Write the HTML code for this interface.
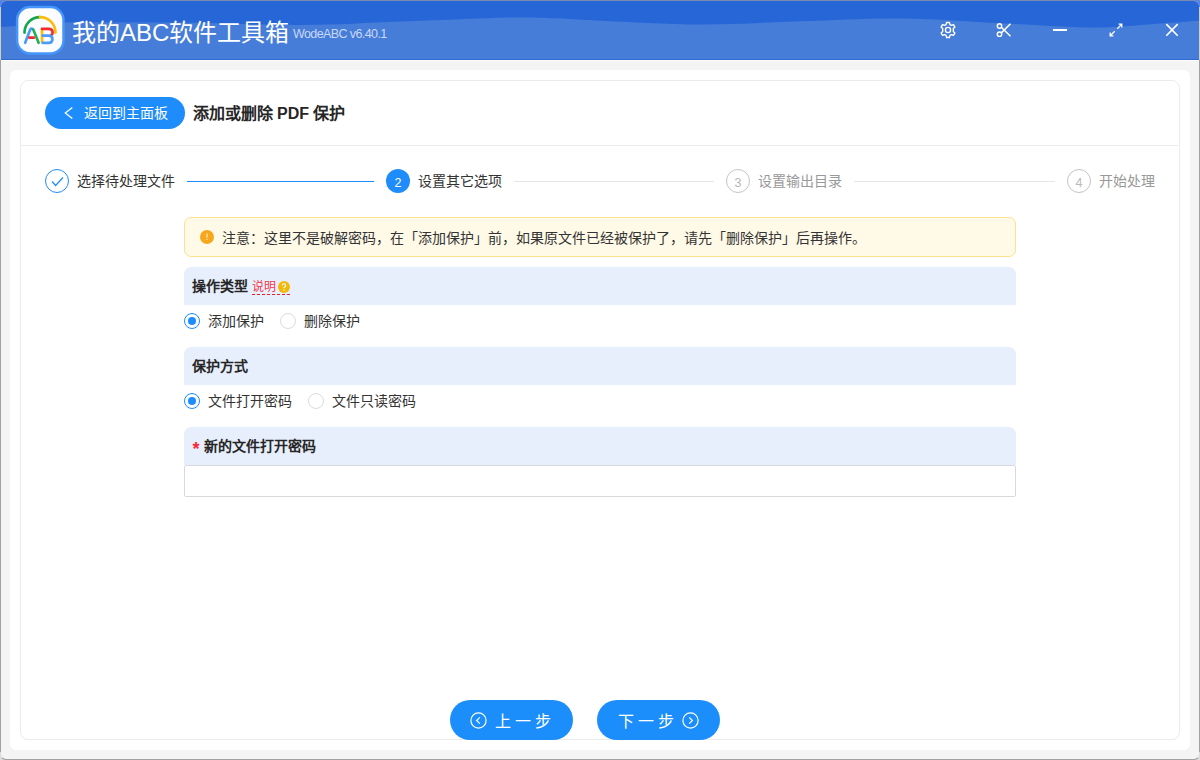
<!DOCTYPE html>
<html lang="zh-CN">
<head>
<meta charset="utf-8">
<title>我的ABC软件工具箱</title>
<style>
*{box-sizing:border-box;margin:0;padding:0}
html,body{width:1200px;height:760px;overflow:hidden;background:#d5ccb4}
body{font-family:"Liberation Sans",sans-serif;color:#333;position:relative}
.desk{position:absolute;left:0;top:0;width:1200px;height:7px;background:#5a83e3}
.desk2{position:absolute;left:0;bottom:0;width:1200px;height:8px;background:#dcdcdc}
.win{position:absolute;left:0;top:0;width:1200px;height:760px;border:1px solid #a0a0a0;border-top-color:#7b8bb5;border-left-color:transparent;border-right-color:transparent;border-radius:7px 7px 6px 6px;overflow:hidden;background:#f4f4f4;background-clip:padding-box}
.vb{position:absolute;top:60px;width:1px;height:692px;background:#a0a0a0}
.hdr{position:absolute;left:0;top:0;width:1198px;height:59px;background:#467dd9;overflow:hidden}
.hdr svg.wave{position:absolute;left:0;top:0}
.hdr .bline{position:absolute;left:0;top:58px;width:100%;height:1px;background:#2d6ad6}
.cream{position:absolute;left:0;top:59px;width:100%;height:1px;background:#fffcf4}
.abs{position:absolute;white-space:nowrap}
.j{text-align:justify;text-align-last:justify}
.title{left:72px;top:15.5px;font-size:24px;line-height:34px;color:#fff;letter-spacing:0}
.ver{left:293px;top:25px;font-size:12.5px;line-height:18px;letter-spacing:-0.6px;color:#c9d8f4}
.card{position:absolute;left:10px;top:70px;width:1180px;height:680px;background:#fff;border-radius:6px}
.panel{position:absolute;left:20px;top:80px;width:1160px;height:660px;border:1px solid #ebebeb;border-radius:8px;background:#fff}
.back{position:absolute;left:45px;top:97px;width:140px;height:32px;border-radius:16px;background:#1e8cfa;color:#fff}
.back .t{position:absolute;left:38.5px;top:0;font-size:14px;line-height:32px}
.ptitle{left:192.5px;top:103px;font-size:16px;line-height:22px;color:#262626;font-weight:bold}
.sep{position:absolute;left:20px;top:145px;width:1158px;height:1px;background:#ececec}
.circ{position:absolute;width:24px;height:24px;border-radius:50%;top:169px;text-align:center;font-size:12.5px;line-height:27px}
.c-done{border:1px solid #1e8cfa}
.c-act{background:#1e8cfa;color:#fff;line-height:29px}
.c-wait{border:1px solid #c4c4c4;color:#b8b8b8}
.stxt{top:171px;font-size:14px;line-height:20px}
.line{position:absolute;top:181px;height:1px}
.notice{position:absolute;left:184px;top:217px;width:832px;height:40px;border:1px solid #fde28c;border-radius:7px;background:#fff9e7}
.ntxt{left:221.5px;top:227.5px;font-size:14px;line-height:20px;color:#333}
.sh{position:absolute;left:184px;width:832px;height:38px;background:#e8effc;border-radius:7px 7px 0 0}
.shtxt{font-size:14px;line-height:20px;font-weight:bold;color:#262626}
.radio{position:absolute;width:16px;height:16px;border-radius:50%;border:1px solid #dcdcdc;background:#fff}
.radio.on{border-color:#1e8cfa}
.radio.on:after{content:"";position:absolute;left:3px;top:3px;width:8px;height:8px;border-radius:50%;background:#1e8cfa}
.rtxt{font-size:14px;line-height:20px;color:#333}
.input{position:absolute;left:184px;top:465px;width:832px;height:32px;border-radius:2px;border:1px solid #d9d9d9;background:#fff}
.btn{position:absolute;top:700px;width:123px;height:40px;border-radius:20px;background:#1c8efc;color:#fff}
.btn .t{position:absolute;top:2px;font-size:16px;line-height:40px;letter-spacing:4px}
</style>
</head>
<body>
<div class="desk"></div><div class="desk2"></div>
<div class="win">
  <div class="hdr">
    <svg class="wave" width="1200" height="60" viewBox="0 0 1200 60">
      <path d="M-20 0 L-20 27 C-16.7 26.83 -10.0 26.63 0.0 26.00 C10.0 25.37 28.3 23.98 40.0 23.20 C51.7 22.42 46.7 21.57 70.0 21.30 C93.3 21.03 141.7 21.15 180.0 21.60 C218.3 22.05 263.3 24.18 300.0 24.00 C336.7 23.82 366.7 21.72 400.0 20.50 C433.3 19.28 475.0 17.25 500.0 16.70 C525.0 16.15 533.3 16.70 550.0 17.20 C566.7 17.70 575.0 18.65 600.0 19.70 C625.0 20.75 666.7 23.40 700.0 23.50 C733.3 23.60 766.7 21.30 800.0 20.30 C833.3 19.30 866.7 17.17 900.0 17.50 C933.3 17.83 975.0 21.05 1000.0 22.30 C1025.0 23.55 1033.3 24.30 1050.0 25.00 C1066.7 25.70 1083.3 26.78 1100.0 26.50 C1116.7 26.22 1133.3 24.43 1150.0 23.30 C1166.7 22.17 1188.3 20.50 1200.0 19.70 C1211.7 18.90 1216.7 18.70 1220.0 18.50 L1220 0 Z" fill="#2766d6"/>
    </svg>
    <div class="bline"></div>
  </div>
  <div class="cream"></div>
</div>
<div class="vb" style="left:0"></div><div class="vb" style="left:1199px"></div>

<!-- logo -->
<svg class="abs" style="left:15px;top:4.5px" width="51" height="51" viewBox="0 0 51 51">
  <rect x="2.1" y="2.1" width="46.4" height="46.4" rx="13" fill="#fafcff" stroke="#4596fc" stroke-width="2.5"/>
  <path d="M9.5 27.6 A15.5 15.5 0 0 1 25 12.1" fill="none" stroke="#12a64a" stroke-width="2.7" stroke-linecap="round"/>
  <path d="M25 12.1 A15.5 15.5 0 0 1 40.5 27.6" fill="none" stroke="#fbbc0c" stroke-width="2.7" stroke-linecap="round"/>
  <path d="M10.2 37.8 L15 25 Q16.5 22.4 18.2 24.6" fill="none" stroke="#4a9cf8" stroke-width="2.7" stroke-linecap="round"/>
  <path d="M18.2 24.6 Q19 26 23.6 37.8" fill="none" stroke="#22b057" stroke-width="2.7" stroke-linecap="round"/>
  <path d="M14.4 32.7 H18.8" fill="none" stroke="#f52a2a" stroke-width="2.7" stroke-linecap="round"/>
  <path d="M27 23.8 V37.8" fill="none" stroke="#fbbc0c" stroke-width="2.7"/>
  <path d="M27 23.8 H33.5 Q37.6 23.8 37.6 27.2 Q37.6 29.2 36.4 30" fill="none" stroke="#f52a2a" stroke-width="2.7" stroke-linecap="round"/>
  <path d="M27.6 30.6 H33.6 Q37.4 30.6 37.4 34.2 Q37.4 37.8 33.6 37.8 H27.6" fill="none" stroke="#4a9cf8" stroke-width="2.7" stroke-linecap="round"/>
</svg>
<div class="abs title j" style="width:213px">我的ABC软件工具箱</div>
<div class="abs ver">WodeABC v6.40.1</div>

<div class="card"></div>
<div class="panel"></div>


<!-- title bar icons -->
<svg class="abs" style="left:938px;top:20px" width="20" height="20" viewBox="0 0 20 20">
  <path d="M8.6 2.5 H11.4 L11.9 4.6 L13.4 5.4 L15.5 4.7 L16.9 7.1 L15.3 8.6 V10 V11.4 L16.9 12.9 L15.5 15.3 L13.4 14.6 L11.9 15.4 L11.4 17.5 H8.6 L8.1 15.4 L6.6 14.6 L4.5 15.3 L3.1 12.9 L4.7 11.4 V8.6 L3.1 7.1 L4.5 4.7 L6.6 5.4 L8.1 4.6 Z" fill="none" stroke="#fff" stroke-width="1.4" stroke-linejoin="round"/>
  <circle cx="10" cy="10" r="2.6" fill="none" stroke="#fff" stroke-width="1.4"/>
</svg>
<svg class="abs" style="left:994px;top:20px" width="20" height="20" viewBox="0 0 20 20">
  <circle cx="5.5" cy="6" r="2.2" fill="none" stroke="#fff" stroke-width="1.4"/>
  <circle cx="5.5" cy="14.2" r="2.2" fill="none" stroke="#fff" stroke-width="1.4"/>
  <path d="M7.3 7.3 L16.5 16.3 M7.3 12.9 L16.5 3.7" fill="none" stroke="#fff" stroke-width="1.5"/>
</svg>
<div class="abs" style="left:1053px;top:29px;width:14px;height:2px;background:#fff"></div>
<svg class="abs" style="left:1106px;top:20px" width="20" height="20" viewBox="0 0 20 20">
  <path d="M11.3 8.7 L15.6 4.4 M12.6 4.2 H15.8 V7.4 M8.7 11.3 L4.4 15.6 M4.2 12.6 V15.8 H7.4" fill="none" stroke="#fff" stroke-width="1.3"/>
</svg>
<svg class="abs" style="left:1161px;top:20px" width="20" height="20" viewBox="0 0 20 20">
  <path d="M5.3 4.1 L16.7 15.8 M16.7 4.1 L5.3 15.8" fill="none" stroke="#fff" stroke-width="1.6"/>
</svg>

<!-- header row -->
<div class="back">
  <svg class="abs" style="left:18px;top:9px" width="12" height="14" viewBox="0 0 12 14"><path d="M9.3 1.5 L2.3 7 L9.3 12.5" fill="none" stroke="#fff" stroke-width="1.3"/></svg>
  <div class="t j" style="width:84px">返回到主面板</div>
</div>
<div class="abs ptitle j" style="width:150px">添加或删除 <b>PDF</b> 保护</div>
<div class="sep"></div>

<!-- steps -->
<div class="circ c-done" style="left:45px">
  <svg class="abs" style="left:5px;top:6px" width="13" height="11" viewBox="0 0 13 11"><path d="M1 5.5 L4.6 9.5 L12 1.5" fill="none" stroke="#1e8cfa" stroke-width="1.2"/></svg>
</div>
<div class="abs stxt j" style="width:98px;left:77px;color:#333">选择待处理文件</div>
<div class="line" style="left:187px;width:187px;background:#1e8cfa"></div>
<div class="circ c-act" style="left:386px">2</div>
<div class="abs stxt j" style="width:84px;left:418px;color:#333">设置其它选项</div>
<div class="line" style="left:514px;width:200px;background:#e6e6e6"></div>
<div class="circ c-wait" style="left:726px">3</div>
<div class="abs stxt j" style="width:84px;left:758px;color:#999">设置输出目录</div>
<div class="line" style="left:854px;width:201px;background:#e6e6e6"></div>
<div class="circ c-wait" style="left:1067px">4</div>
<div class="abs stxt j" style="width:56px;left:1099px;color:#999">开始处理</div>

<!-- notice -->
<div class="notice"></div>
<svg class="abs" style="left:200px;top:230px" width="14" height="14" viewBox="0 0 14 14"><circle cx="7" cy="7" r="7" fill="#f7a71b"/><path d="M7 3.6 V7.8" stroke="#fde3b0" stroke-width="1.3"/><path d="M6.35 9.5 H7.65" stroke="#fde3b0" stroke-width="1.1"/></svg>
<div class="abs ntxt j" style="width:644px">注意：这里不是破解密码，在「添加保护」前，如果原文件已经被保护了，请先「删除保护」后再操作。</div>

<!-- section 1 -->
<div class="sh" style="top:267px"></div>
<div class="abs shtxt j" style="width:56px;left:192px;top:276px">操作类型</div>
<div class="abs j" style="width:24px;left:252px;top:278px;font-size:12px;line-height:18px;color:#f03a4a">说明</div>
<div class="abs" style="left:252px;top:294px;width:38px;height:0;border-top:1px dashed #ee1c25"></div>
<svg class="abs" style="left:278px;top:281px" width="12" height="12" viewBox="0 0 12 12"><circle cx="6" cy="6" r="6" fill="#f2b90c"/><path d="M4.3 4.6 Q4.3 2.8 6 2.8 Q7.7 2.8 7.7 4.4 Q7.7 5.4 6.6 5.9 Q6 6.2 6 7.2" fill="none" stroke="#fff" stroke-width="1.1"/><circle cx="6" cy="9" r="0.7" fill="#fff"/></svg>
<div class="radio on" style="left:184px;top:313px"></div>
<div class="abs rtxt j" style="width:56px;left:208px;top:311px">添加保护</div>
<div class="radio" style="left:280px;top:313px"></div>
<div class="abs rtxt j" style="width:56px;left:304px;top:311px">删除保护</div>

<!-- section 2 -->
<div class="sh" style="top:347px"></div>
<div class="abs shtxt j" style="width:56px;left:192px;top:356px">保护方式</div>
<div class="radio on" style="left:184px;top:393px"></div>
<div class="abs rtxt j" style="width:84px;left:208px;top:391px">文件打开密码</div>
<div class="radio" style="left:308px;top:393px"></div>
<div class="abs rtxt j" style="width:84px;left:332px;top:391px">文件只读密码</div>

<!-- section 3 -->
<div class="sh" style="top:427px"></div>
<div class="abs" style="left:192.5px;top:439px;font-size:18px;line-height:20px;color:#f5283a;font-weight:bold">*</div>
<div class="abs shtxt j" style="width:112px;left:204px;top:436px">新的文件打开密码</div>
<div class="input"></div>

<!-- bottom buttons -->
<div class="btn" style="left:450px">
  <svg class="abs" style="left:20px;top:12px" width="17" height="17" viewBox="0 0 17 17"><circle cx="8.5" cy="8.5" r="7.6" fill="none" stroke="#fff" stroke-width="1.2"/><path d="M9.8 5.3 L6.6 8.5 L9.8 11.7" fill="none" stroke="#fff" stroke-width="1.2"/></svg>
  <div class="t j" style="left:45px;width:60px">上一步</div>
</div>
<div class="btn" style="left:597px">
  <div class="t j" style="left:21px;width:60px">下一步</div>
  <svg class="abs" style="left:85px;top:12px" width="17" height="17" viewBox="0 0 17 17"><circle cx="8.5" cy="8.5" r="7.6" fill="none" stroke="#fff" stroke-width="1.2"/><path d="M7.2 5.3 L10.4 8.5 L7.2 11.7" fill="none" stroke="#fff" stroke-width="1.2"/></svg>
</div>

</body>
</html>
